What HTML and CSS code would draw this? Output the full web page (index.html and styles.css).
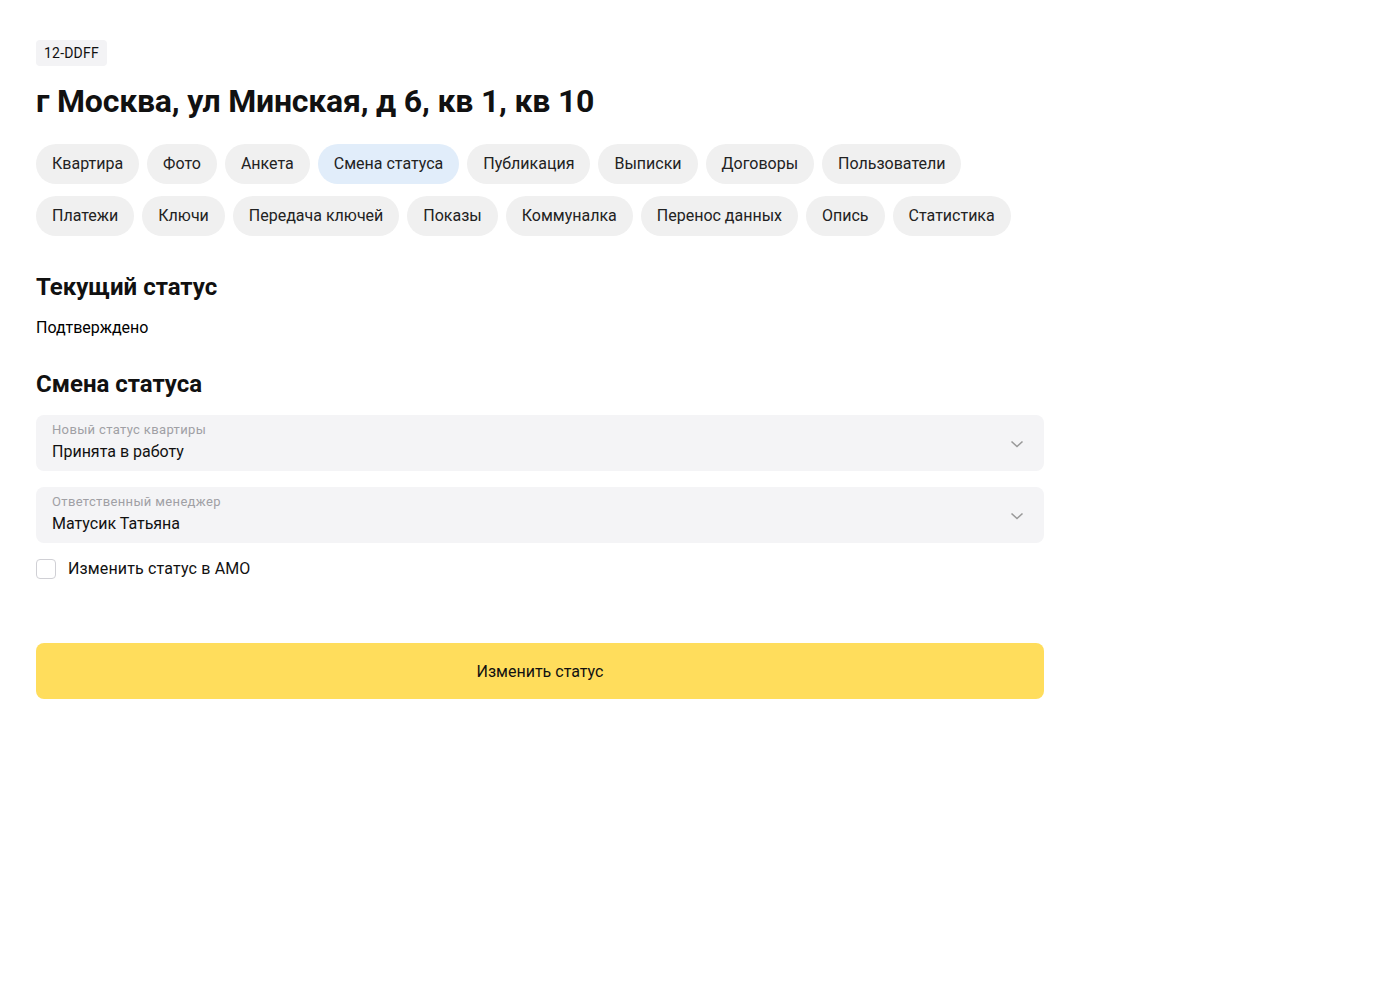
FILE: index.html
```html
<!DOCTYPE html>
<html lang="ru">
<head>
<meta charset="utf-8">
<link rel="stylesheet" href="styles.css">
</head>
<body>
<div class="page">
  <div class="tag">12-DDFF</div>
  <h1 class="title">г Москва, ул Минская, д 6, кв 1, кв 10</h1>
  <div class="tabs">
    <div class="tab-row">
      <span class="chip">Квартира</span>
      <span class="chip">Фото</span>
      <span class="chip">Анкета</span>
      <span class="chip active">Смена статуса</span>
      <span class="chip">Публикация</span>
      <span class="chip">Выписки</span>
      <span class="chip">Договоры</span>
      <span class="chip">Пользователи</span>
    </div>
    <div class="tab-row">
      <span class="chip">Платежи</span>
      <span class="chip">Ключи</span>
      <span class="chip">Передача ключей</span>
      <span class="chip">Показы</span>
      <span class="chip">Коммуналка</span>
      <span class="chip">Перенос данных</span>
      <span class="chip">Опись</span>
      <span class="chip">Статистика</span>
    </div>
  </div>

  <h2 class="section-title first">Текущий статус</h2>
  <p class="status">Подтверждено</p>

  <h2 class="section-title second">Смена статуса</h2>
  <div class="form">
    <div class="select">
      <div class="select-text">
        <div class="select-label">Новый статус квартиры</div>
        <div class="select-value">Принята в работу</div>
      </div>
      <svg class="chev" width="14" height="8" viewBox="0 0 14 8"><path d="M1.5 1.5 L7 6.5 L12.5 1.5" fill="none" stroke="#999" stroke-width="1.6"/></svg>
    </div>
    <div class="select">
      <div class="select-text">
        <div class="select-label">Ответственный менеджер</div>
        <div class="select-value">Матусик Татьяна</div>
      </div>
      <svg class="chev" width="14" height="8" viewBox="0 0 14 8"><path d="M1.5 1.5 L7 6.5 L12.5 1.5" fill="none" stroke="#999" stroke-width="1.6"/></svg>
    </div>
    <label class="check">
      <span class="box"></span>
      <span class="check-label">Изменить статус в АМО</span>
    </label>
    <button class="submit">Изменить статус</button>
  </div>
</div>
</body>
</html>
```

FILE: styles.css
```css
* { box-sizing: border-box; }
html, body { margin: 0; padding: 0; background: #fff; }
body {
  font-family: Roboto, "Liberation Sans", Arial, sans-serif;
  color: #000;
}
.page {
  padding: 40px 36px;
  width: 1080px;
}
.tag {
  display: inline-block;
  background: #f3f3f5;
  border-radius: 4px;
  font-size: 14px;
  line-height: 26px;
  height: 26px;
  padding: 0 8px;
  color: #111;
  letter-spacing: 0.2px;
}
.title {
  margin: 17px 0 0;
  font-size: 32px;
  line-height: 36px;
  font-weight: 700;
  letter-spacing: -0.2px;
  color: #111;
}
.tabs {
  margin-top: 25px;
  display: flex;
  flex-direction: column;
  gap: 12px;
}
.tab-row {
  display: flex;
  gap: 8px;
}
.chip {
  height: 40px;
  line-height: 40px;
  padding: 0 16px;
  border-radius: 20px;
  background: #f0f0f0;
  font-size: 16px;
  color: #222;
  white-space: nowrap;
}
.chip.active {
  background: #e1edfa;
}
.section-title {
  font-size: 24px;
  line-height: 28px;
  font-weight: 700;
  margin: 0;
  color: #111;
}
.section-title.first { margin-top: 37px; }
.section-title.second { margin-top: 32px; }
.status {
  margin: 17px 0 0;
  font-size: 16px;
  line-height: 20px;
}
.form {
  width: 1008px;
  margin-top: 17px;
  display: flex;
  flex-direction: column;
}
.select {
  height: 56px;
  background: #f4f4f6;
  border-radius: 8px;
  padding: 7px 20px 0 16px;
  display: flex;
  align-items: center;
  justify-content: space-between;
  margin-bottom: 16px;
}
.select-text {
  align-self: flex-start;
}
.select-label {
  font-size: 13px;
  line-height: 16px;
  color: #a0a0a5;
  letter-spacing: 0.35px;
}
.select-value {
  font-size: 16px;
  line-height: 24px;
  margin-top: 2px;
  color: #111;
}
.chev { margin-top: -6px; }
.check {
  display: flex;
  align-items: center;
  gap: 12px;
  margin-top: 0;
}
.box {
  width: 20px;
  height: 20px;
  border: 1px solid #d0d0d5;
  border-radius: 4px;
  background: #fff;
}
.check-label {
  font-size: 16px;
  line-height: 20px;
  color: #111;
  letter-spacing: 0.15px;
}
.submit {
  margin-top: 64px;
  height: 56px;
  border: none;
  border-radius: 8px;
  background: #ffdd5c;
  font-family: inherit;
  font-size: 16px;
  color: #111;
}
```
